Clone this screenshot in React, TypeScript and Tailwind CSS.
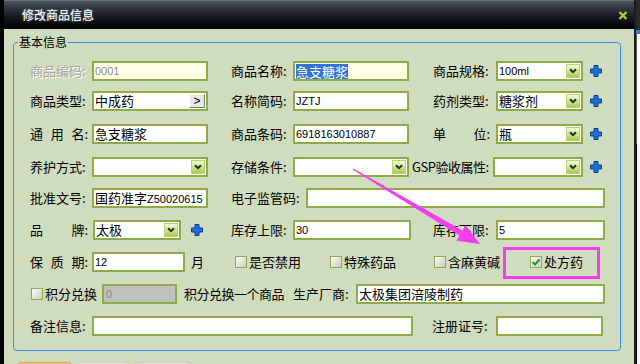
import React from "react";

const LBL = "text-[13px] leading-[20px] whitespace-nowrap shrink-0";
const TXT = "font-['Liberation_Sans','Noto_Sans_CJK_SC',sans-serif] text-[11px] whitespace-nowrap";
const CJK = "text-[13px] font-['Noto_Sans_CJK_SC',sans-serif]";

function Plus({ className = "" }: { className?: string }) {
  return (
    <div className={"shrink-0 flex items-center " + className}>
      <svg width="14" height="14" viewBox="0 0 14 14">
        <path d="M5 1.5h4v3.5h3.5v4h-3.5v3.5h-4v-3.5h-3.5v-4h3.5z" fill="#1c6fd9" stroke="#0a3c8c" strokeWidth="1" />
      </svg>
    </div>
  );
}

function DropBtn() {
  return (
    <div className="ml-auto mr-[1px] w-[14px] h-[14px] border border-[#b9d27a] bg-gradient-to-b from-[#f4fbd6] to-[#a6cf45] flex items-center justify-center shrink-0">
      <svg width="8" height="6" viewBox="0 0 8 6">
        <path d="M1 1.2l3 3 3-3" stroke="#2b2b2b" strokeWidth="2" fill="none" />
      </svg>
    </div>
  );
}

function Box({ className = "", children, dim = false }: { className?: string; children?: React.ReactNode; dim?: boolean }) {
  return (
    <div
      className={
        "h-[20px] border-2 border-[#8fab46] flex items-center pl-[1px] shrink-0 overflow-hidden " +
        TXT +
        (dim ? " text-[#8a8a8a] " : " text-black ") +
        className
      }
    >
      {children}
    </div>
  );
}

function Check({ checked = false, label, className = "" }: { checked?: boolean; label: string; className?: string }) {
  return (
    <div className={"flex items-center shrink-0 " + className}>
      <div className="w-[12px] h-[12px] border border-[#8fab46] bg-gradient-to-br from-white to-[#c9cbc2] flex items-center justify-center shrink-0">
        {checked && (
          <svg width="10" height="10" viewBox="0 0 10 10">
            <path d="M1.5 5l2.5 2.5 4.5-5" stroke="#1f9a2a" strokeWidth="2" fill="none" />
          </svg>
        )}
      </div>
      <span className="ml-[2px] text-[13px] leading-[20px] whitespace-nowrap text-black">{label}</span>
    </div>
  );
}

export default function App() {
  return (
    <div className="relative w-[640px] h-[364px] overflow-hidden flex bg-black text-black font-['Noto_Sans_CJK_SC',sans-serif]">
      <div className="w-[4px] bg-black shrink-0" />
      <div className="w-[630px] flex flex-col shrink-0">
        {/* Title bar */}
        <div className="h-[29px] shrink-0 flex items-center bg-gradient-to-b from-[#4a5159] via-[#1b1f24] to-[#020304] border-t border-[#6a7077] pl-[18px] pr-[6px]">
          <span className="text-[12px] text-white leading-none [text-shadow:0_0_2px_#9ab]">修改商品信息</span>
          <div className="ml-auto">
            <svg width="10" height="9" viewBox="0 0 10 9">
              <path d="M1.5 1l7 7M8.5 1l-7 7" stroke="#a8d22c" strokeWidth="2.4" />
            </svg>
          </div>
        </div>
        {/* Body */}
        <div className="flex-1 bg-[#d0dcbe] flex flex-col">
          <div className="relative ml-[9px] mt-[13px] w-[608px] h-[309px] border border-[#3b8ded] rounded-[4px] shrink-0">
            <span className="absolute -top-[9px] left-[4px] px-[1px] bg-[#d0dcbe] text-[12px] leading-[16px] text-black">基本信息</span>
            <div className="pl-[16px] pt-[18px] flex flex-col">
              {/* Row 1 */}
              <div className="h-[20px] flex items-center">
                <div className={LBL + " w-[62px] text-[#a3a3a3] [text-shadow:1px_1px_0_#ffffff]"}>商品编码:</div>
                <Box className="w-[116px] bg-[#ffffe6]" dim>0001</Box>
                <div className={LBL + " ml-[23px] w-[62px]"}>商品名称:</div>
                <Box className="w-[116px] bg-[#ffffe6]">
                  <span className={"bg-[#3273d6] text-white leading-[15px] " + CJK}>急支糖浆</span>
                </Box>
                <div className={LBL + " ml-[24px] w-[63px]"}>商品规格:</div>
                <Box className="w-[87px] bg-white"><span>100ml</span><DropBtn /></Box>
                <Plus className="ml-[6px]" />
              </div>
              {/* Row 2 */}
              <div className="h-[20px] mt-[10px] flex items-center">
                <div className={LBL + " w-[62px]"}>商品类型:</div>
                <Box className="w-[116px] bg-white">
                  <span className={CJK}>中成药</span>
                  <div className="ml-auto mr-[1px] w-[16px] h-[14px] bg-[#e8e8e6] border border-t-white border-l-white border-r-[#7a7a7a] border-b-[#7a7a7a] flex items-center justify-center text-[12px] leading-none text-black">&gt;</div>
                </Box>
                <div className={LBL + " ml-[23px] w-[62px]"}>名称简码:</div>
                <Box className="w-[116px] bg-white"><span>JZTJ</span></Box>
                <div className={LBL + " ml-[24px] w-[63px]"}>药剂类型:</div>
                <Box className="w-[87px] bg-white"><span className={CJK}>糖浆剂</span><DropBtn /></Box>
                <Plus className="ml-[6px]" />
              </div>
              {/* Row 3 */}
              <div className="h-[20px] mt-[13px] flex items-center">
                <div className={LBL + " w-[62px]"}>
                  <div className="w-[58px] flex justify-between"><span>通</span><span>用</span><span>名:</span></div>
                </div>
                <Box className="w-[116px] bg-white"><span className={CJK}>急支糖浆</span></Box>
                <div className={LBL + " ml-[23px] w-[62px]"}>商品条码:</div>
                <Box className="w-[116px] bg-white"><span>6918163010887</span></Box>
                <div className={LBL + " ml-[24px] w-[63px]"}>
                  <div className="w-[57px] flex justify-between"><span>单</span><span>位:</span></div>
                </div>
                <Box className="w-[87px] bg-white"><span className={CJK}>瓶</span><DropBtn /></Box>
                <Plus className="ml-[6px]" />
              </div>
              {/* Row 4 */}
              <div className="h-[20px] mt-[13px] flex items-center">
                <div className={LBL + " w-[62px]"}>养护方式:</div>
                <Box className="w-[116px] bg-white"><DropBtn /></Box>
                <div className={LBL + " ml-[23px] w-[62px]"}>存储条件:</div>
                <Box className="w-[116px] bg-white"><DropBtn /></Box>
                <div className={LBL + " ml-[3px] w-[81px] tracking-[-0.5px]"}>GSP验收属性:</div>
                <Box className="w-[90px] bg-white"><DropBtn /></Box>
                <Plus className="ml-[6px]" />
              </div>
              {/* Row 5 */}
              <div className="h-[20px] mt-[11px] flex items-center">
                <div className={LBL + " w-[62px]"}>批准文号:</div>
                <Box className="w-[116px] bg-white"><span className="shrink-0"><span className={CJK}>国药准字</span>Z50020615</span></Box>
                <div className={LBL + " ml-[23px] w-[75px]"}>电子监管码:</div>
                <Box className="w-[299px] bg-white" />
              </div>
              {/* Row 6 */}
              <div className="h-[20px] mt-[12px] flex items-center">
                <div className={LBL + " w-[63px]"}>
                  <div className="w-[58px] flex justify-between"><span>品</span><span>牌:</span></div>
                </div>
                <Box className="w-[88px] bg-white"><span className={CJK}>太极</span><DropBtn /></Box>
                <Plus className="ml-[9px]" />
                <div className={LBL + " ml-[27px] w-[62px]"}>库存上限:</div>
                <Box className="w-[118px] bg-white"><span>30</span></Box>
                <div className={LBL + " ml-[22px] w-[63px]"}>库存下限:</div>
                <Box className="w-[109px] bg-white"><span>5</span></Box>
              </div>
              {/* Row 7 */}
              <div className="h-[20px] mt-[12px] flex items-center">
                <div className={LBL + " w-[62px]"}>
                  <div className="w-[58px] flex justify-between"><span>保</span><span>质</span><span>期:</span></div>
                </div>
                <Box className="w-[93px] bg-white"><span>12</span></Box>
                <div className={LBL + " ml-[6px] w-[44px]"}>月</div>
                <Check label="是否禁用" className="w-[95px]" />
                <Check label="特殊药品" className="w-[104px]" />
                <Check label="含麻黄碱" className="w-[96px]" />
                <Check label="处方药" checked className="w-[70px]" />
              </div>
              {/* Row 8 */}
              <div className="h-[20px] mt-[12px] flex items-center">
                <Check label="积分兑换" className="ml-[1px] w-[71px]" />
                <Box className="w-[75px] bg-[#c0c0c0] pl-[2px]" dim><span>0</span></Box>
                <div className={LBL + " ml-[7px] w-[109px] tracking-[-0.5px]"}>积分兑换一个商品</div>
                <div className={LBL + " w-[63px]"}>生产厂商:</div>
                <Box className="w-[249px] bg-white"><span className={CJK}>太极集团涪陵制药</span></Box>
              </div>
              {/* Row 9 */}
              <div className="h-[20px] mt-[12px] flex items-center">
                <div className={LBL + " w-[62px]"}>备注信息:</div>
                <Box className="w-[321px] bg-white" />
                <div className={LBL + " ml-[19px] w-[64px]"}>注册证号:</div>
                <Box className="w-[107px] bg-white" />
              </div>
            </div>
          </div>
          {/* Tabs */}
          <div className="mt-[11px] ml-[12px] flex gap-[3px] shrink-0">
            <div className="w-[57px] h-[10px] rounded-t-[5px] bg-[#f6c27c] border border-[#e2a552]" />
            <div className="w-[55px] h-[10px] rounded-t-[5px] bg-[#e2e7da] border border-[#c5cbbd]" />
            <div className="ml-[1px] w-[58px] h-[10px] rounded-t-[5px] bg-[#e2e7da] border border-[#c5cbbd]" />
          </div>
        </div>
      </div>
      <div className="w-[2px] bg-[#1c1c1c] shrink-0" />
      <div className="w-[4px] flex flex-col shrink-0">
        <div className="h-[30px] bg-[#2a2a2a]" />
        <div className="h-[4px] bg-[#3a7bd5]" />
        <div className="h-[110px] bg-white border-l border-[#555]" />
        <div className="flex-1 bg-[#eef2f6] border-l border-black" />
      </div>

      {/* Annotation overlays */}
      <div className="absolute left-[503px] top-[247px] w-[97px] h-[32px] border-[3px] border-[#f53cf0] pointer-events-none" />
      <svg className="absolute left-0 top-0 pointer-events-none" width="640" height="364" viewBox="0 0 640 364">
        <polygon points="352.6,169.6 353.4,168.4 462.5,230.4 459.5,235.6" fill="#f53cf0" />
        <polygon points="480,244 456.4,240.7 465.6,225.3" fill="#f53cf0" />
      </svg>
    </div>
  );
}
